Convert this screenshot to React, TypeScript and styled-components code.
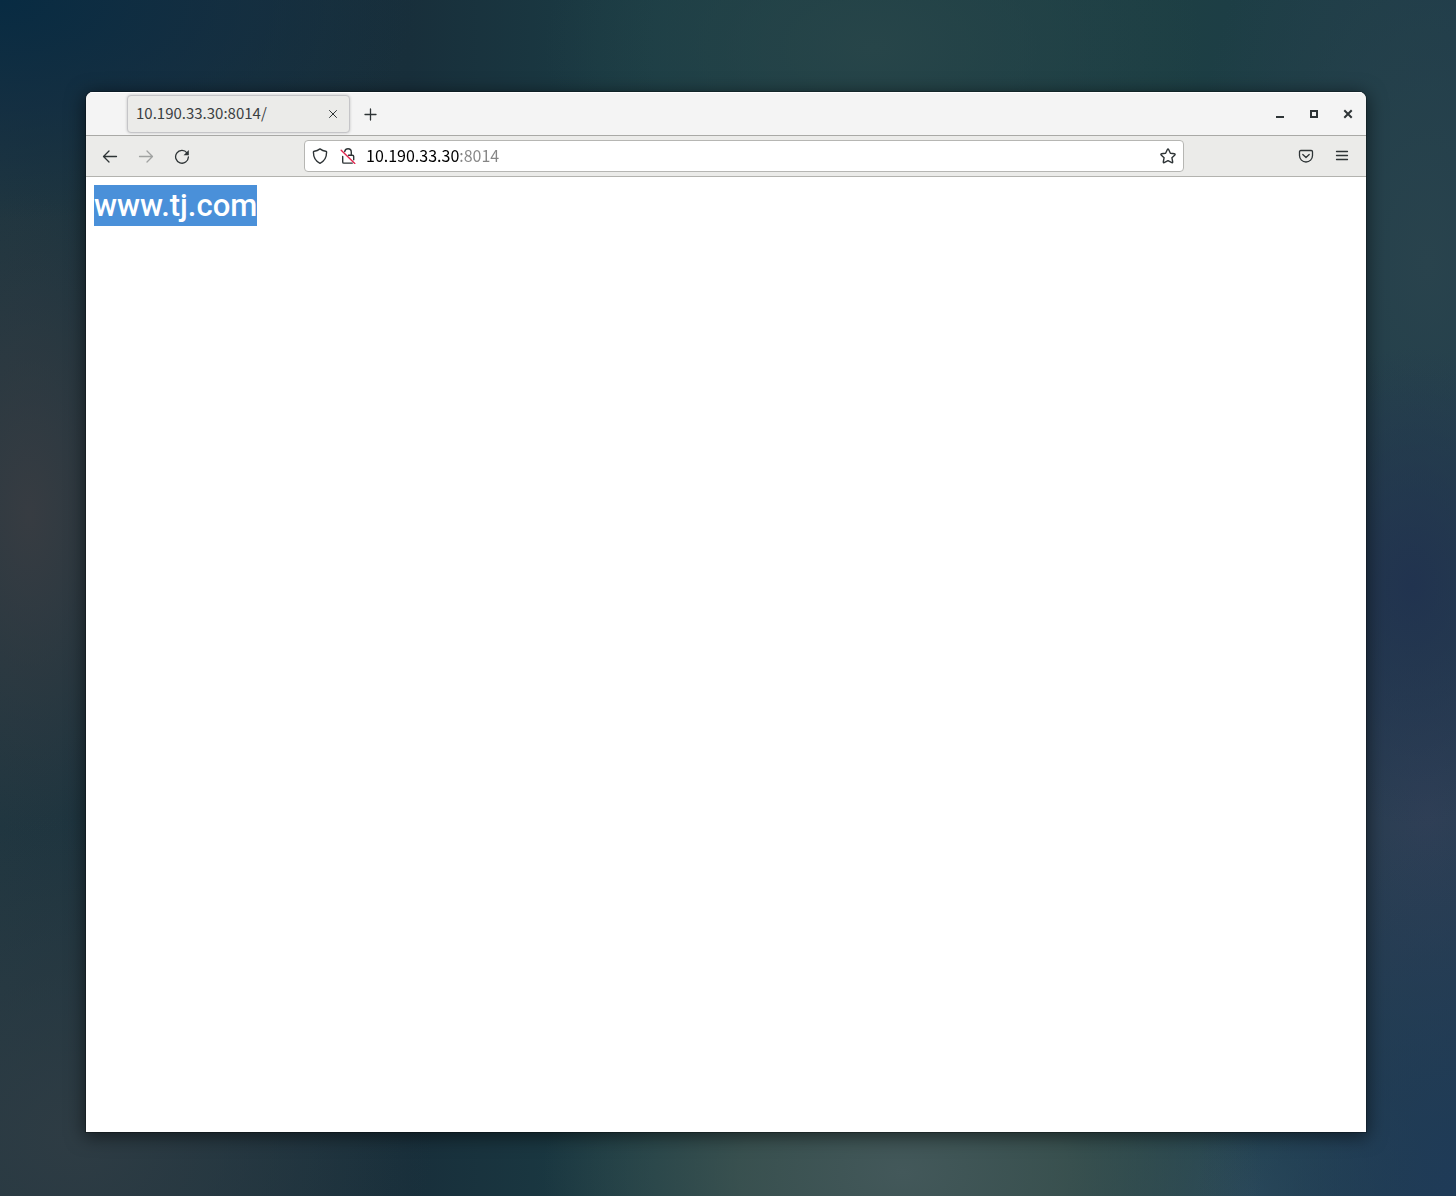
import React from "react";
import styled, { createGlobalStyle } from "styled-components";

const GlobalStyle = createGlobalStyle`
  *, *::before, *::after { box-sizing: border-box; }
  body { margin: 0; background: #1f343d; }
`;

const Desktop = styled.div`
  display: flex;
  min-height: 100vh;
  padding: 92px 90px 64px 86px;
  font-family: "Noto Sans CJK SC", "Noto Sans", sans-serif;
  background:
    radial-gradient(ellipse 420px 220px at 0% 0%, #082b42 0%, rgba(15, 44, 66, 0.7) 50%, rgba(20, 46, 68, 0) 100%),
    radial-gradient(ellipse 360px 220px at 62% 98%, #43585a 0%, rgba(64, 85, 82, 0.8) 45%, rgba(50, 75, 78, 0) 100%),
    radial-gradient(ellipse 260px 380px at 100% 100%, #1f3b58 0%, rgba(31, 56, 84, 0) 100%),
    radial-gradient(ellipse 180px 170px at 86% 100%, #2b4a5a 0%, rgba(43, 74, 90, 0) 100%),
    radial-gradient(ellipse 160px 240px at 97% 49%, #21334f 0%, rgba(34, 52, 79, 0) 100%),
    radial-gradient(ellipse 150px 320px at 2% 43%, #373c42 0%, rgba(54, 60, 66, 0) 100%),
    radial-gradient(ellipse 360px 320px at 5% 95%, #2e3c44 0%, rgba(46, 60, 68, 0) 100%),
    radial-gradient(ellipse 330px 200px at 60% 4%, #274549 0%, rgba(39, 69, 73, 0) 100%),
    radial-gradient(ellipse 240px 460px at 98% 22%, #29434d 0%, rgba(41, 67, 77, 0) 100%),
    radial-gradient(ellipse 240px 460px at 98% 68%, #2f3f56 0%, rgba(46, 61, 85, 0) 100%),
    linear-gradient(90deg, #203640 0%, #182f3b 28%, #1b3d45 45%, #1d3f44 80%, #1d3b49 100%);
`;

const Window = styled.section`
  display: flex;
  flex: 1;
  flex-direction: column;
  overflow: hidden;
  border-radius: 7px 7px 0 0;
  background: #fff;
  box-shadow: 0 0 0 1px rgba(0, 0, 0, 0.25), 0 3px 18px 2px rgba(0, 0, 0, 0.5);
`;

const TitleBar = styled.header`
  display: flex;
  align-items: center;
  height: 44px;
  padding: 0 1px 0 41px;
  border-bottom: 1px solid #a9a9a6;
  background: #f4f4f4;
  box-shadow: inset 0 1px #fff;
`;

const Tab = styled.div`
  display: flex;
  align-items: center;
  width: 223px;
  height: 38px;
  margin-right: 2px;
  padding: 0 4px 0 8px;
  border: 1px solid #c5c5c8;
  border-radius: 4px;
  background: #ebebe9;
  box-shadow: 0 0 3px rgba(0, 0, 0, 0.2);
`;

const TabTitle = styled.span`
  flex: 1;
  padding-bottom: 2px;
  color: #3b4042;
  font-size: 15px;
  line-height: 24px;
`;

const IconButton = styled.button<{ $size: number }>`
  display: grid;
  place-items: center;
  flex: none;
  width: ${({ $size }) => $size}px;
  height: ${({ $size }) => $size}px;
  padding: 0;
  border: 0;
  border-radius: 4px;
  background: transparent;
  color: #2e3436;

  &:disabled { color: #a0a2a1; }
`;

const WindowControls = styled.div`
  display: flex;
  margin-left: auto;
`;

const Toolbar = styled.nav`
  display: flex;
  align-items: center;
  height: 41px;
  padding: 0 6px;
  border-bottom: 1px solid #b3b3af;
  background: #ebebe9;
`;

const ToolGroup = styled.div`
  display: flex;
`;

const AddressBar = styled.form`
  display: flex;
  align-items: center;
  flex: 1;
  height: 32px;
  margin: 0 104px;
  padding-left: 1px;
  border: 1px solid #b6b6b3;
  border-radius: 4px;
  background: #fff;
`;

/* The host is black and everything after it grey, painted through the text. */
const AddressInput = styled.input`
  flex: 1;
  min-width: 0;
  height: 30px;
  padding: 0 0 2px 4px;
  border: 0;
  outline: 0;
  background: linear-gradient(90deg, #000 98px, #858585 98px);
  -webkit-background-clip: text;
  background-clip: text;
  color: transparent;
  caret-color: #000;
  font-family: inherit;
  font-size: 16px;
  line-height: 24px;
`;

const Page = styled.main`
  padding: 8px;
  font-family: Roboto, "Liberation Sans", sans-serif;
`;

const PageTitle = styled.h1`
  display: inline-block;
  margin: 0;
  background: #4a90d9;
  color: #fff;
  font-size: 31px;
  font-weight: 500;
  line-height: 41px;
`;

const Svg = ({ children, stroke = 1.3 }: { children: React.ReactNode; stroke?: number }) => (
  <svg width="16" height="16" viewBox="0 0 16 16" fill="none" stroke="currentColor"
    strokeWidth={stroke} strokeLinecap="round" strokeLinejoin="round" aria-hidden="true">
    {children}
  </svg>
);

export default function App() {
  return (
    <>
      <GlobalStyle />
      <Desktop>
        <Window>
          <TitleBar>
            <Tab>
              <TabTitle>10.190.33.30:8014/</TabTitle>
              <IconButton $size={24} aria-label="Close tab">
                <Svg stroke={1}><path d="M4.5 4.5l7 7M11.5 4.5l-7 7" /></Svg>
              </IconButton>
            </Tab>
            <IconButton $size={36} aria-label="New tab">
              <Svg><path d="M8.5 3v11M3 8.5h11" /></Svg>
            </IconButton>
            <WindowControls>
              <IconButton $size={34} aria-label="Minimize">
                <Svg><path d="M4 10h8v2H4z" fill="currentColor" stroke="none" /></Svg>
              </IconButton>
              <IconButton $size={34} aria-label="Maximize">
                <Svg><path d="M4 4h8v8H4zM6 6v4h4V6z" fill="currentColor" fillRule="evenodd" stroke="none" /></Svg>
              </IconButton>
              <IconButton $size={34} aria-label="Close window">
                <Svg stroke={2}><path d="M5 5l6 6M11 5l-6 6" strokeLinecap="square" /></Svg>
              </IconButton>
            </WindowControls>
          </TitleBar>
          <Toolbar>
            <ToolGroup>
              <IconButton $size={36} aria-label="Back">
                <Svg><path d="M14.5 8.5H1.6M7 3L1.5 8.5L7 14" /></Svg>
              </IconButton>
              <IconButton $size={36} aria-label="Forward" disabled>
                <Svg><path d="M1.5 8.5h12.9M9 3l5.5 5.5L9 14" /></Svg>
              </IconButton>
              <IconButton $size={36} aria-label="Reload">
                <Svg>
                  <path d="M13 4.8A6.4 6.4 0 1 0 14.4 9" />
                  <path d="M14.8 2v5.2H9.6z" fill="currentColor" stroke="none" />
                </Svg>
              </IconButton>
            </ToolGroup>
            <AddressBar onSubmit={(e) => e.preventDefault()}>
              <IconButton $size={28} type="button" aria-label="Tracking protection">
                <Svg stroke={1.4}>
                  <path d="M8 .9C9.8 2.2 12 3 13.7 3.2c.6.1.9.4.9.9C14.6 9.3 12.6 13.2 8 15.3C3.4 13.2 1.4 9.3 1.4 4.1c0-.5.3-.8.9-.9C4 3 6.2 2.2 8 .9z" />
                </Svg>
              </IconButton>
              <IconButton $size={28} type="button" aria-label="Connection not secure">
                <Svg stroke={1.4}>
                  <path d="M4.7 3.5C5.2 1.6 6.4.8 8 .8c2.2 0 3.3 1.4 3.3 3.4V7.2M2.7 8.5v5.4c0 .8.5 1.2 1.2 1.2H12.3M8.5 7.2h3.9c.8 0 1.3.5 1.3 1.3v3.2" />
                  <path d="M1.2 2.2L14.8 15.5" stroke="#e22850" />
                </Svg>
              </IconButton>
              <AddressInput type="text" aria-label="Address" defaultValue="10.190.33.30:8014" spellCheck={false} />
              <IconButton $size={30} type="button" aria-label="Bookmark this page">
                <Svg stroke={1.4}>
                  <path d="M7.4 1.5q.6-.9 1.2 0L10.4 5.3l4.2.5q.9.3.3 1.1L11.9 9.7l.8 4.3q0 .9-.9.6L8 12.6l-3.8 2q-.9.3-.9-.6l.8-4.3L1.1 6.9q-.6-.8.3-1.1l4.2-.5z" />
                </Svg>
              </IconButton>
            </AddressBar>
            <ToolGroup>
              <IconButton $size={36} aria-label="Save to Pocket">
                <Svg>
                  <path d="M2.8 2.5h10.4c.8 0 1.3.5 1.3 1.3v3.7a6.5 6.5 0 0 1-13 0V3.8c0-.8.5-1.3 1.3-1.3zM4.8 6.5L8 9.5l3.2-3" />
                </Svg>
              </IconButton>
              <IconButton $size={36} aria-label="Open application menu">
                <Svg stroke={1.3}><path d="M2.5 3.5h11M2.5 7.5h11M2.5 11.5h11" /></Svg>
              </IconButton>
            </ToolGroup>
          </Toolbar>
          <Page>
            <PageTitle>www.tj.com</PageTitle>
          </Page>
        </Window>
      </Desktop>
    </>
  );
}
